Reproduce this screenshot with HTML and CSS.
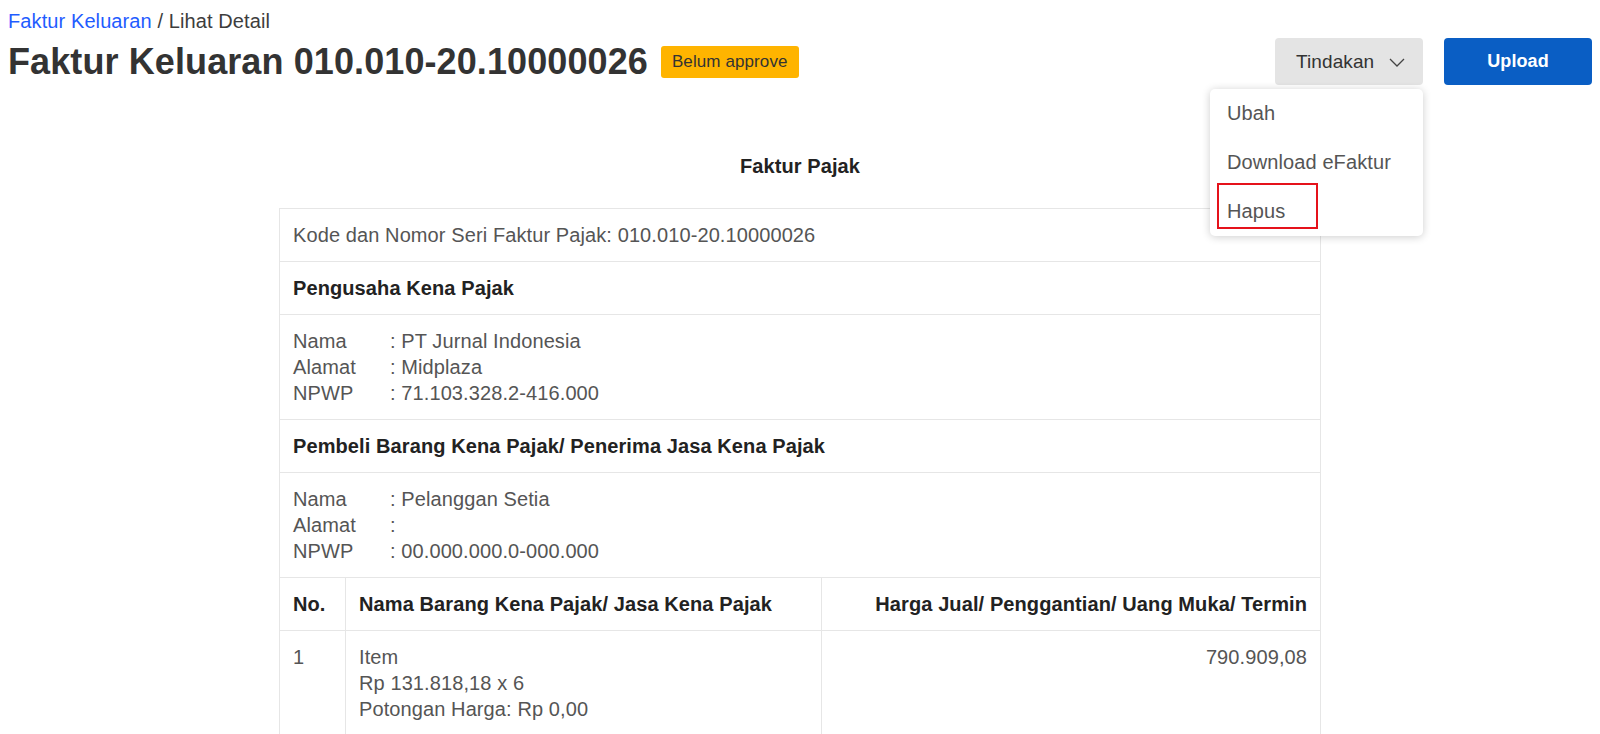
FILE: index.html
```html
<!DOCTYPE html>
<html>
<head>
    <title>Lihat Detail - Faktur Keluaran</title>
    <link rel="stylesheet" href="styles.css">
</head>
<body>
    <div class="breadcrumb"><a href="#">Faktur Keluaran</a> / Lihat Detail</div>

    <div class="page-header">
        <div class="title-group">
            <h1>Faktur Keluaran 010.010-20.10000026</h1>
            <span class="badge">Belum approve</span>
        </div>
        <div class="actions">
            <div class="action-menu">
                <button class="btn btn-light">
                    Tindakan
                    <svg class="chevron" width="16" height="9" viewBox="0 0 16 9">
                        <polyline points="1,1 8,8 15,1" fill="none" stroke="#444" stroke-width="1.3"/>
                    </svg>
                </button>
                <ul class="dropdown">
                    <li>Ubah</li>
                    <li>Download eFaktur</li>
                    <li class="marked">Hapus</li>
                </ul>
            </div>
            <button class="btn btn-primary">Upload</button>
        </div>
    </div>

    <div class="invoice">
        <h2>Faktur Pajak</h2>
        <table class="invoice-table">
            <colgroup>
                <col class="col-no">
                <col class="col-name">
                <col>
            </colgroup>
            <tr>
                <td colspan="3">Kode dan Nomor Seri Faktur Pajak: 010.010-20.10000026</td>
            </tr>
            <tr>
                <th colspan="3">Pengusaha Kena Pajak</th>
            </tr>
            <tr>
                <td colspan="3">
                    <div class="party">
                        <span>Nama</span><span>: PT Jurnal Indonesia</span>
                        <span>Alamat</span><span>: Midplaza</span>
                        <span>NPWP</span><span>: 71.103.328.2-416.000</span>
                    </div>
                </td>
            </tr>
            <tr>
                <th colspan="3">Pembeli Barang Kena Pajak/ Penerima Jasa Kena Pajak</th>
            </tr>
            <tr>
                <td colspan="3">
                    <div class="party">
                        <span>Nama</span><span>: Pelanggan Setia</span>
                        <span>Alamat</span><span>:</span>
                        <span>NPWP</span><span>: 00.000.000.0-000.000</span>
                    </div>
                </td>
            </tr>
            <tr>
                <th>No.</th>
                <th>Nama Barang Kena Pajak/ Jasa Kena Pajak</th>
                <th class="num">Harga Jual/ Penggantian/ Uang Muka/ Termin</th>
            </tr>
            <tr>
                <td>1</td>
                <td>Item<br>Rp 131.818,18 x 6<br>Potongan Harga: Rp 0,00</td>
                <td class="num">790.909,08</td>
            </tr>
        </table>
    </div>
</body>
</html>
```

FILE: styles.css
```css
body {
    font-family: "Liberation Sans", Arial, sans-serif;
    font-size: 20px;
    letter-spacing: 0.1px;
    color: #555;
    margin: 8px;
}

.breadcrumb {
    margin-top: 2px;
    line-height: 23px;
    color: #3d3d3d;
}

.breadcrumb a {
    color: #1f5cff;
    text-decoration: none;
}

.page-header {
    display: flex;
    justify-content: space-between;
    align-items: center;
    margin-top: 5px;
    height: 47px;
}

.title-group {
    display: flex;
    align-items: center;
    gap: 13px;
}

h1 {
    margin: 0;
    font-size: 36px;
    line-height: 41px;
    color: #333;
}

.badge {
    background-color: #ffb400;
    color: #333;
    font-size: 17px;
    line-height: 32px;
    padding: 0 11px;
    border-radius: 3px;
}

.actions {
    display: flex;
    gap: 21px;
}

.action-menu {
    position: relative;
}

.btn {
    height: 47px;
    width: 148px;
    border: none;
    border-radius: 4px;
    font-family: inherit;
    letter-spacing: inherit;
    cursor: pointer;
}

.btn-light {
    display: flex;
    align-items: center;
    gap: 15px;
    padding: 0 17px 0 21px;
    background-color: #e4e4e4;
    color: #333;
    font-size: 19px;
}

.btn-primary {
    background-color: #0a5ec4;
    color: #fff;
    font-size: 18px;
    font-weight: bold;
}

.chevron {
    margin-top: 2px;
}

.dropdown {
    position: absolute;
    top: 51px;
    right: 0;
    width: 213px;
    margin: 0;
    padding: 0;
    list-style: none;
    background-color: #fff;
    border-radius: 5px;
    box-shadow: 0 1px 8px rgba(0, 0, 0, 0.2);
    z-index: 10;
}

.dropdown li {
    padding: 12px 17px;
    line-height: 25px;
    color: #555;
}

.dropdown li.marked {
    position: relative;
}

.dropdown li.marked::after {
    content: "";
    position: absolute;
    left: 7px;
    top: -4px;
    width: 97px;
    height: 42px;
    border: 2px solid #e5121b;
}

.invoice {
    width: 1042px;
    margin: 70px auto 0;
}

.invoice h2 {
    margin: 0 0 30px;
    font-size: 20px;
    line-height: 23px;
    text-align: center;
    color: #222;
}

.invoice-table {
    width: 100%;
    border-collapse: collapse;
    table-layout: fixed;
}

.col-no {
    width: 66px;
}

.col-name {
    width: 476px;
}

.invoice-table th,
.invoice-table td {
    padding: 13px;
    line-height: 26px;
    text-align: left;
    vertical-align: top;
    border: 1px solid #e6e6e6;
}

.invoice-table th {
    color: #222;
}

.invoice-table .num {
    text-align: right;
}

.party {
    display: grid;
    grid-template-columns: 97px 1fr;
}
```
